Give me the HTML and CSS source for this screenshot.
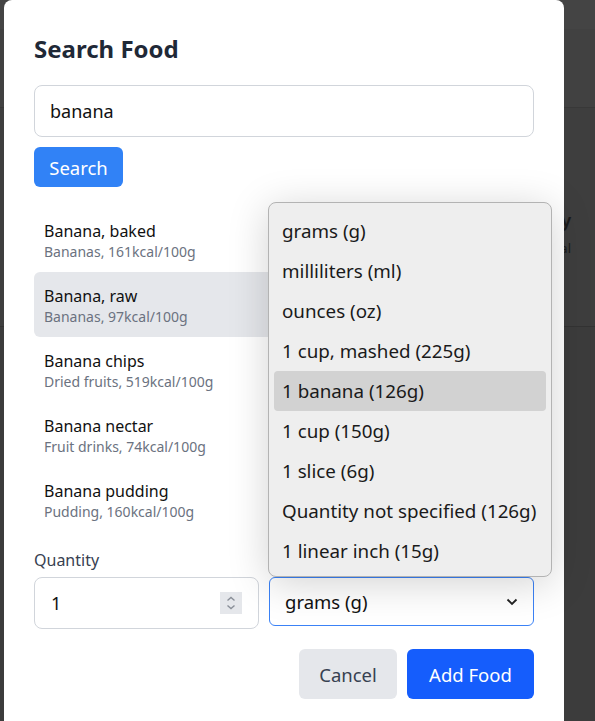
FILE: index.html
```html
<!DOCTYPE html>
<html>
<head>
<meta charset="utf-8">
<link rel="stylesheet" href="styles.css">
</head>
<body>
<div class="page">
  <div class="topbar"></div>
  <div class="band"></div>
  <div class="bgcard">
    <div class="bgrow"><span class="bgtitle">Today</span><span class="bgsub">kcal</span></div>
  </div>
  <div class="bgfoot"></div>
</div>

<div class="modal">
  <h2 class="title">Search Food</h2>
  <div class="search-input">banana</div>
  <button class="btn btn-search">Search</button>

  <ul class="results">
    <li class="result"><div class="r-name">Banana, baked</div><div class="r-meta">Bananas, 161kcal/100g</div></li>
    <li class="result active"><div class="r-name">Banana, raw</div><div class="r-meta">Bananas, 97kcal/100g</div></li>
    <li class="result"><div class="r-name">Banana chips</div><div class="r-meta">Dried fruits, 519kcal/100g</div></li>
    <li class="result"><div class="r-name">Banana nectar</div><div class="r-meta">Fruit drinks, 74kcal/100g</div></li>
    <li class="result"><div class="r-name">Banana pudding</div><div class="r-meta">Pudding, 160kcal/100g</div></li>
  </ul>

  <div class="label">Quantity</div>
  <div class="qty-row">
    <div class="qty-input">
      <span>1</span>
      <span class="spinner">
        <svg width="22" height="22" viewBox="0 0 22 22"><path d="M7.5 8.5 L11 5.5 L14.5 8.5" fill="none" stroke="#8a8f98" stroke-width="1.4"/><path d="M7.5 13.5 L11 16.5 L14.5 13.5" fill="none" stroke="#8a8f98" stroke-width="1.4"/></svg>
      </span>
    </div>
    <div class="unit-select">
      <span>grams (g)</span>
      <svg width="12" height="8" viewBox="0 0 12 8"><path d="M1.5 1.5 L6 6 L10.5 1.5" fill="none" stroke="#222" stroke-width="1.8"/></svg>
    </div>
  </div>

  <div class="actions">
    <button class="btn btn-cancel">Cancel</button>
    <button class="btn btn-add">Add Food</button>
  </div>

  <ul class="dropdown">
    <li class="opt">grams (g)</li>
    <li class="opt">milliliters (ml)</li>
    <li class="opt">ounces (oz)</li>
    <li class="opt">1 cup, mashed (225g)</li>
    <li class="opt sel">1 banana (126g)</li>
    <li class="opt">1 cup (150g)</li>
    <li class="opt">1 slice (6g)</li>
    <li class="opt">Quantity not specified (126g)</li>
    <li class="opt">1 linear inch (15g)</li>
  </ul>
</div>
</body>
</html>
```

FILE: styles.css
```css
* { box-sizing: border-box; }
html, body { margin: 0; padding: 0; }
body {
  width: 595px;
  height: 721px;
  overflow: hidden;
  background: #3d3d3d;
  font-family: "Noto Sans", "Open Sans", sans-serif;
  position: relative;
}
.page { display: flex; flex-direction: column; height: 721px; overflow: hidden; }
.topbar { height: 29px; background: #444444; flex: none; }
.band { height: 79px; background: #414141; border-bottom: 1px solid #383838; flex: none; }
.bgcard {
  height: 219px;
  flex: none;
  background: #3e3e3e;
  border-bottom: 1px solid #333333;
  padding: 100px 0 0 0;
}
.bgrow { display: flex; flex-direction: column; align-items: flex-end; padding-right: 24px; color: #1a1a1a; }
.bgtitle { font-size: 18px; font-weight: 600; line-height: 24px; }
.bgsub { font-size: 13px; line-height: 20px; margin-top: 6px; }
.bgfoot { flex: 1; background: #3c3c3c; }

.modal {
  position: absolute;
  left: 4px;
  top: 0;
  width: 560px;
  height: 721px;
  background: #ffffff;
  border-radius: 8px 8px 0 0;
  padding: 32px 30px 0 30px;
}
.title {
  margin: 0;
  font-size: 24px;
  line-height: 33px;
  font-weight: 700;
  color: #1f2937;
}
.search-input {
  margin-top: 20px;
  height: 52px;
  border: 1px solid #d1d5db;
  border-radius: 8px;
  padding: 0 15px;
  display: flex;
  align-items: center;
  font-size: 18px;
  color: #111111;
}
.btn {
  border: 0;
  font-family: inherit;
  font-size: 18.5px;
  border-radius: 6px;
  display: inline-flex;
  align-items: center;
  justify-content: center;
  padding: 0;
}
.btn-search {
  margin-top: 10px;
  height: 40px;
  width: 89px;
  background: #3182f6;
  color: #ffffff;
}
.results {
  list-style: none;
  margin: 20px 0 0 0;
  padding: 0;
}
.result {
  height: 65px;
  padding: 13px 10px 0 10px;
  border-radius: 6px;
}
.result.active { background: #e5e7eb; }
.r-name { font-size: 16px; line-height: 22px; color: #111111; }
.r-meta { font-size: 14px; line-height: 19px; color: #6b7280; }

.label {
  margin-top: 17px;
  font-size: 16px;
  line-height: 22px;
  color: #374151;
}
.qty-row {
  margin-top: 6px;
  display: grid;
  grid-template-columns: 225px 1fr;
  gap: 10px;
  align-items: start;
}
.qty-input {
  height: 52px;
  border: 1px solid #d1d5db;
  border-radius: 8px;
  padding: 0 16px 0 16px;
  display: flex;
  align-items: center;
  justify-content: space-between;
  font-size: 18px;
  color: #111111;
}
.spinner {
  width: 22px;
  height: 22px;
  background: #e5e7eb;
  display: flex;
}
.unit-select {
  height: 49px;
  border: 1px solid #3b82f6;
  border-radius: 6px;
  padding: 0 15px 0 15px;
  display: flex;
  align-items: center;
  justify-content: space-between;
  font-size: 18.5px;
  color: #111111;
}
.actions {
  margin-top: 20px;
  display: flex;
  justify-content: flex-end;
  gap: 10px;
}
.btn-cancel { width: 98px; height: 50px; background: #e5e7eb; color: #374151; }
.btn-add { width: 127px; height: 50px; background: #155dfc; color: #ffffff; }

.dropdown {
  position: absolute;
  left: 264px;
  top: 202px;
  width: 284px;
  height: 375px;
  margin: 0;
  list-style: none;
  padding: 8px 5px;
  background: #eeeeee;
  border: 1px solid #b3b3b3;
  border-radius: 8px;
  box-shadow: 0 6px 40px rgba(0, 0, 0, 0.18);
}
.opt {
  height: 40px;
  line-height: 40px;
  padding-left: 8px;
  font-size: 18.8px;
  color: #1a1a1a;
  white-space: nowrap;
  border-radius: 4px;
}
.opt.sel { background: #d2d2d2; }
```
